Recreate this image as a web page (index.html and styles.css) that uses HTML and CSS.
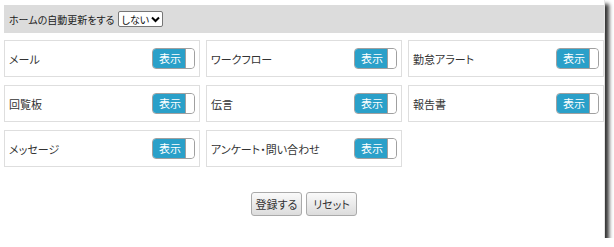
FILE: index.html
```html
<!DOCTYPE html>
<html lang="ja">
<head>
  <meta charset="UTF-8" />
  <title>ホーム設定</title>
  <link rel="stylesheet" href="styles.css">
</head>
<body>
  <div class="frame">
    <div class="refresh-bar">
      ホームの自動更新をする
      <span class="select">しない<svg width="9" height="7" viewBox="0 0 9 7"><path d="M1 1.5 L4.5 5 L8 1.5" fill="none" stroke="#000" stroke-width="2"/></svg></span>
    </div>

    <div class="cards">
      <div class="card"><span>メール</span><span class="toggle"><b>表示</b><i></i></span></div>
      <div class="card"><span>ワークフロー</span><span class="toggle"><b>表示</b><i></i></span></div>
      <div class="card"><span>勤怠アラート</span><span class="toggle"><b>表示</b><i></i></span></div>
      <div class="card"><span>回覧板</span><span class="toggle"><b>表示</b><i></i></span></div>
      <div class="card"><span>伝言</span><span class="toggle"><b>表示</b><i></i></span></div>
      <div class="card"><span>報告書</span><span class="toggle"><b>表示</b><i></i></span></div>
      <div class="card"><span>メッセージ</span><span class="toggle"><b>表示</b><i></i></span></div>
      <div class="card"><span>アンケート・問い合わせ</span><span class="toggle"><b>表示</b><i></i></span></div>
    </div>

    <div class="actions">
      <button class="btn">登録する</button>
      <button class="btn">リセット</button>
    </div>
  </div>
</body>
</html>
```

FILE: styles.css
```css
body {
  margin: 0;
  background: #fff;
  font-family: "Noto Sans CJK JP", "DejaVu Sans", sans-serif;
  font-size: 11px;
  font-feature-settings: "palt";
  color: #333;
}
.frame {
  width: 605px;
  height: 238px;
  padding: 5px 0 0 4px;
  box-sizing: border-box;
  border-right: 1px solid #e4e4e4;
  box-shadow: 4px 4px 4px rgba(0, 0, 0, 0.8);
}
.refresh-bar {
  width: 600px;
  height: 28px;
  background: #dcdcdc;
  display: flex;
  align-items: center;
  padding-left: 5px;
  box-sizing: border-box;
  font-size: 10px;
  color: #222;
}
.select {
  display: inline-flex;
  align-items: center;
  gap: 2px;
  height: 16px;
  box-sizing: border-box;
  margin-left: 3px;
  padding: 0 2px 0 3px;
  background: #fff;
  border: 1px solid #767676;
  border-radius: 2px;
  color: #111;
}
.cards {
  display: grid;
  grid-template-columns: repeat(3, 196px);
  grid-auto-rows: 37px;
  column-gap: 6px;
  row-gap: 8px;
  margin-top: 7px;
}
.card {
  border: 1px solid #dedede;
  display: flex;
  align-items: center;
  justify-content: space-between;
  padding: 0 4px;
  color: #333;
}
.toggle {
  display: flex;
  width: 43px;
  height: 21px;
  box-sizing: border-box;
  border: 1px solid #a0a0a0;
  border-radius: 4px;
  overflow: hidden;
  margin-top: -1px;
}
.toggle b {
  flex: 1;
  background: #2aa0c9;
  color: #fff;
  font-weight: normal;
  display: flex;
  align-items: center;
  padding-left: 6px;
}
.toggle i {
  width: 8px;
  background: #fff;
  border-left: 1px solid #a0a0a0;
  border-radius: 0 3px 3px 0;
}
.actions {
  display: flex;
  justify-content: center;
  gap: 4px;
  margin-top: 25px;
  width: 600px;
}
.btn {
  width: 51px;
  height: 24px;
  padding: 0;
  font-family: inherit;
  font-size: 11px;
  font-feature-settings: "palt";
  color: #333;
  background: linear-gradient(#fafafa, #dcdcdc);
  border: 1px solid #aaa;
  border-radius: 3px;
}
```
